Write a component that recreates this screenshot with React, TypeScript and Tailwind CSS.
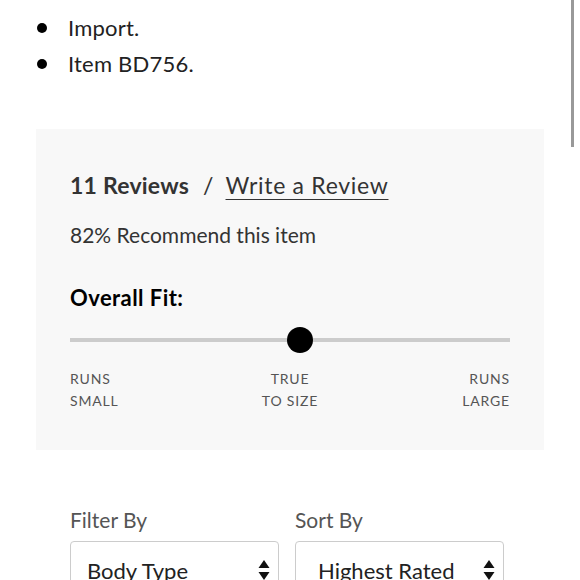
import React from "react";

function Arrows() {
  return (
    <svg width="12" height="22" viewBox="0 0 12 22" className="shrink-0">
      <path d="M6 1 L11.5 9 H0.5 Z" fill="#111" />
      <path d="M6 21 L11.5 13 H0.5 Z" fill="#111" />
    </svg>
  );
}

export default function App() {
  return (
    <div
      className="relative w-[580px] h-[580px] overflow-hidden bg-white text-[#333]"
      style={{ fontFamily: "Lato, 'Noto Sans', sans-serif" }}
    >
      <div className="absolute right-[6px] top-0 w-[3px] h-[147px] bg-[#999]" />
      <ul className="pt-[14px] pl-[36px] flex flex-col gap-[8px] text-[22px] leading-[28px] tracking-[0.01em] text-[#222]">
        <li className="flex items-center">
          <span className="w-[10px] h-[10px] rounded-full bg-black ml-[1px] mr-[21px]" />
          Import.
        </li>
        <li className="flex items-center">
          <span className="w-[10px] h-[10px] rounded-full bg-black ml-[1px] mr-[21px]" />
          Item BD756.
        </li>
      </ul>
      <div className="ml-[36px] mt-[51px] w-[508px] h-[321px] bg-[#f8f8f8] px-[34px] pt-[41px]">
        <div className="flex items-center text-[23px] leading-[30px]">
          <span className="font-bold text-[#333] tracking-[0.01em]">11 Reviews</span>
          <span className="ml-[14px] mr-[12px] text-[#333]">/</span>
          <span className="underline underline-offset-[5px] decoration-[1px] text-[#333] tracking-[0.03em]">Write a Review</span>
        </div>
        <div className="mt-[22px] text-[21px] leading-[26px] text-[#333]">82% Recommend this item</div>
        <div className="mt-[37px] text-[22px] leading-[26px] font-bold tracking-[0.02em] text-black">Overall Fit:</div>
        <div className="relative mt-[16px] h-[26px] flex items-center">
          <div className="w-full h-[4px] bg-[#cccccc]" />
          <div className="absolute left-[217px] top-0 w-[26px] h-[26px] rounded-full bg-black" />
        </div>
        <div className="mt-[15px] grid grid-cols-3 text-[14px] leading-[22px] tracking-[0.06em] text-[#555]">
          <div className="text-left">RUNS<br />SMALL</div>
          <div className="text-center">TRUE<br />TO SIZE</div>
          <div className="text-right">RUNS<br />LARGE</div>
        </div>
      </div>
      <div className="ml-[70px] mt-[57px] flex gap-[16px]">
        <div className="flex flex-col w-[209px]">
          <div className="text-[21px] leading-[26px] text-[#555]">Filter By</div>
          <div className="mt-[8px] h-[50px] border border-[#cccccc] rounded-[4px] bg-white flex items-center justify-between pl-[16px] pr-[8px] pt-[8px]">
            <span className="text-[22px] text-[#222]">Body Type</span>
            <Arrows />
          </div>
        </div>
        <div className="flex flex-col w-[209px]">
          <div className="text-[21px] leading-[26px] text-[#555]">Sort By</div>
          <div className="mt-[8px] h-[50px] border border-[#cccccc] rounded-[4px] bg-white flex items-center justify-between pl-[22px] pr-[8px] pt-[8px]">
            <span className="text-[22px] text-[#222]">Highest Rated</span>
            <Arrows />
          </div>
        </div>
      </div>
    </div>
  );
}
